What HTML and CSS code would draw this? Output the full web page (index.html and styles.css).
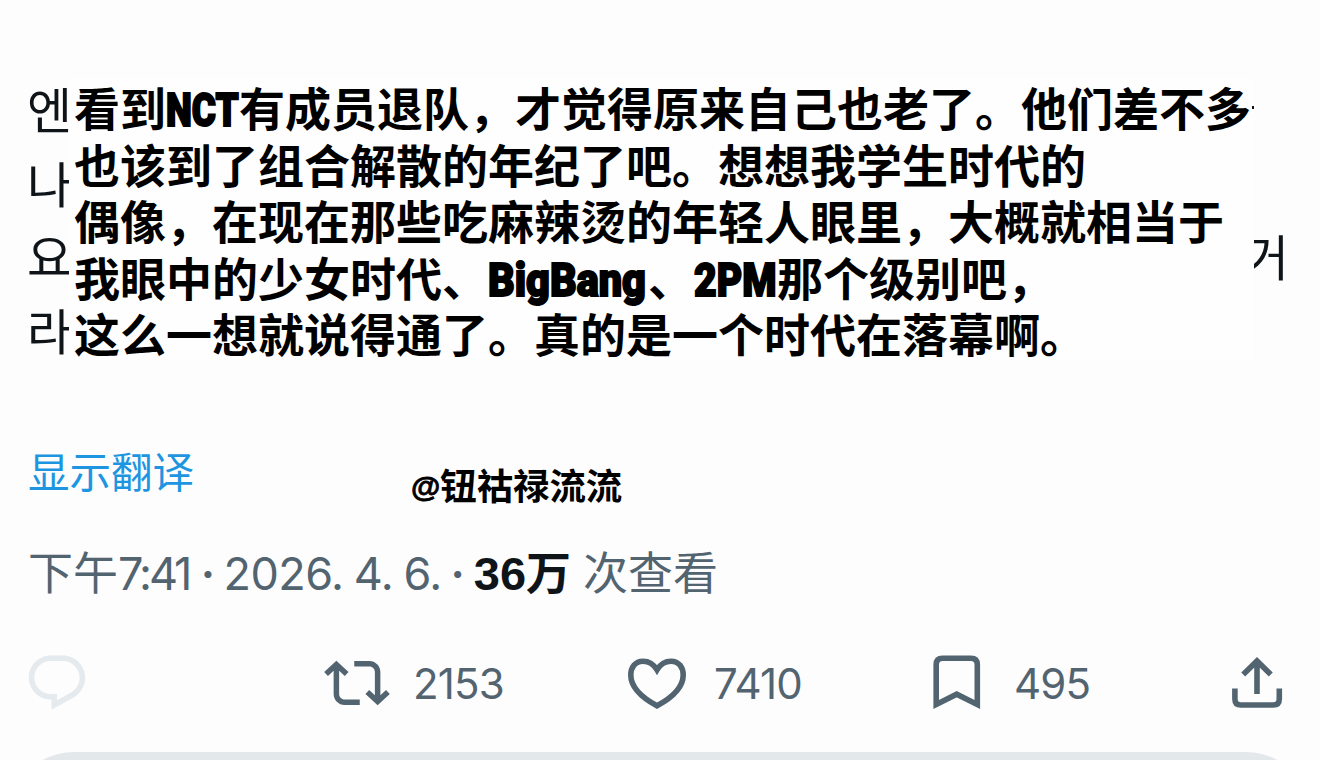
FILE: index.html
```html
<!DOCTYPE html>
<html lang="zh-CN">
<head>
    <meta charset="UTF-8">
    <meta name="viewport" content="width=device-width, initial-scale=1.0">
    <title>Post</title>
    <link rel="stylesheet" href="styles.css">
</head>
<body>
    <main class="post">
        <div class="post-body">
            <div class="original" lang="ko">
                <p>엔</p>
                <p>나</p>
                <p><span>요</span><span class="line-end">거</span></p>
                <p>라</p>
            </div>
            <div class="caption">
                <p>看到<span class="latin nct"><b>NCT</b></span>有成员退队，才觉得原来自己也老了。他们差不多</p>
                <p>也该到了组合解散的年纪了吧。想想我学生时代的</p>
                <p>偶像，在现在那些吃麻辣烫的年轻人眼里，大概就相当于</p>
                <p>我眼中的少女时代、<span class="latin bigbang"><b>BigBang</b></span>、<span class="latin twopm"><b>2PM</b></span>那个级别吧，</p>
                <p>这么一想就说得通了。真的是一个时代在落幕啊。</p>
                <i class="tick"></i>
            </div>
        </div>

        <div class="translate-row">
            <a class="translate">显示翻译</a>
            <span class="watermark"><span class="at">@</span>钮祜禄流流</span>
        </div>

        <div class="meta">
            <span class="time">下午<span class="clock">7:41</span></span>
            <span class="dot">·</span>
            <span class="date">2026. 4. 6.</span>
            <span class="dot">·</span>
            <span class="views"><span class="count">36</span>万</span>
            <span class="views-label">次查看</span>
        </div>

        <div class="actions">
            <div class="action reply">
                <svg width="66" height="66" viewBox="0 0 24 24"><path d="M1.751 10c0-4.42 3.584-8 8.005-8h4.366c4.49 0 8.129 3.64 8.129 8.13 0 2.96-1.607 5.68-4.196 7.11l-8.054 4.46v-3.69h-.067c-4.49.1-8.183-3.51-8.183-8.01zm8.005-6c-3.317 0-6.005 2.69-6.005 6 0 3.37 2.77 6.08 6.138 6.01l.351-.01h1.761v2.3l5.087-2.81c1.951-1.08 3.163-3.13 3.163-5.36 0-3.39-2.744-6.13-6.129-6.13H9.756z"/></svg>
            </div>
            <div class="action repost">
                <svg width="66" height="66" viewBox="0 0 24 24"><path d="M4.5 3.88l4.432 4.14-1.364 1.46L5.5 7.55V16c0 1.1.896 2 2 2H13v2H7.5c-2.209 0-4-1.79-4-4V7.55L1.432 9.48.068 8.02 4.5 3.88zM16.5 6H11V4h5.5c2.209 0 4 1.79 4 4v8.45l2.068-1.93 1.364 1.46-4.432 4.14-4.432-4.14 1.364-1.46 2.068 1.93V8c0-1.1-.896-2-2-2z"/></svg>
                <span>2153</span>
            </div>
            <div class="action like">
                <svg class="line" width="66" height="66" viewBox="0 0 66 66"><path d="M32 19.800C28.500 14 23 11.200 18 11.200C10 11.200 5.800 17.500 5.800 25C5.800 38.500 18.500 48.500 32 55.800C45.500 48.500 58.200 38.500 58.200 25C58.200 17.500 54 11.200 46 11.200C41 11.200 35.500 14 32 19.800Z"/></svg>
                <span>7410</span>
            </div>
            <div class="action bookmark">
                <svg class="line" width="66" height="66" viewBox="0 0 66 66"><path d="M7.200 54.500V14.500Q7.200 8.200 13.500 8.200H42Q48.300 8.200 48.300 14.500V54.500L27.700 44.200Z"/></svg>
                <span>495</span>
            </div>
            <div class="action share">
                <svg class="line" width="66" height="66" viewBox="0 0 66 66"><path d="M30 44V11M16.200 24.500L30 11L43.800 24.500M7.900 38.500V49Q7.900 55 13.900 55H46.300Q52.300 55 52.300 49V38.500"/></svg>
            </div>
        </div>

        <div class="reply-box"></div>
    </main>
</body>
</html>
```
FILE: styles.css
```css
* {
    box-sizing: border-box;
}

body {
    margin: 0;
    background-color: #fdfdfd;
    font-family: Inter, "Noto Sans CJK SC", sans-serif;
    color: #536471;
}

p {
    margin: 0;
}

.post {
    width: 1320px;
    height: 760px;
    padding: 71px 28px 0;
    overflow: hidden;
}

.post-body {
    position: relative;
    height: 363px;
}

.original {
    font-family: "Noto Sans CJK KR", sans-serif;
    font-size: 49px;
    line-height: 73.5px;
    font-weight: 400;
    color: #0f1419;
}

.original p {
    display: flex;
    justify-content: space-between;
    margin-left: -1px;
}

.line-end {
    margin-right: 3px;
}

/* Chinese caption pasted over the original text */
.caption {
    position: absolute;
    left: 41px;
    top: 7px;
    width: 1185px;
    height: 283px;
    padding-left: 5px;
    background-color: #fefefe;
    color: #000;
    font-family: "Noto Sans CJK SC", sans-serif;
    font-size: 46px;
    font-weight: 700;
    line-height: 56.5px;
    white-space: nowrap;
}

.latin {
    display: inline-block;
    font-family: Roboto, sans-serif;
    font-weight: 900;
    line-height: 1;
}

.latin b {
    display: inline-block;
    font-weight: 900;
    -webkit-text-stroke: 2px #000;
    transform: scaleX(0.8);
    transform-origin: left;
}

.nct {
    width: 73px;
}

.bigbang {
    width: 160px;
}

.bigbang b {
    transform: scaleX(0.9);
}

.twopm {
    width: 83px;
}

.twopm b {
    transform: scaleX(0.85);
}

.tick {
    position: absolute;
    right: 0;
    top: 28px;
    width: 2px;
    height: 3px;
    background-color: #0f1419;
}

.translate-row {
    display: flex;
    height: 100px;
}

.translate {
    width: 383px;
    padding-top: 6px;
    font-family: "Noto Sans CJK SC", sans-serif;
    font-size: 41.5px;
    line-height: 60px;
    color: #1d95e0;
}

.watermark {
    padding-top: 20px;
    font-family: "Noto Sans CJK SC", sans-serif;
    font-size: 36.4px;
    font-weight: 700;
    line-height: 60px;
    color: #000;
}

.at {
    position: relative;
    top: -3px;
    font-family: "Liberation Sans", sans-serif;
    font-size: 30px;
    -webkit-text-stroke: 0.8px #000;
}

.meta {
    display: flex;
    align-items: baseline;
    height: 116px;
    padding-top: 10px;
    font-size: 45px;
    line-height: 60px;
    white-space: nowrap;
}

.clock {
    letter-spacing: -3px;
}

.dot {
    width: 34px;
    padding-left: 3px;
    text-align: center;
    font-weight: 600;
}

.date {
    letter-spacing: -0.5px;
    word-spacing: -2px;
}

.date + .dot {
    width: 32px;
    padding-left: 0;
}

.views {
    margin-right: 12px;
    font-weight: 700;
    color: #0f1419;
}

.count {
    font-family: "Liberation Sans", sans-serif;
    font-size: 47px;
}

.actions {
    display: grid;
    grid-template-columns: 300px 301px 304px 298px 66px;
    height: 102px;
    margin-left: -4px;
    margin-right: -12px;
}

.action {
    display: flex;
    align-items: center;
    height: 66px;
    font-size: 42px;
    letter-spacing: -0.8px;
}

.action svg {
    flex: none;
    fill: #536471;
}

.action .line {
    fill: none;
    stroke: #536471;
    stroke-width: 5.6;
}

.action span {
    margin-left: 23px;
}

.action.bookmark span {
    margin-left: 19px;
}

.action.reply svg {
    fill: #e4eaed;
}

.reply-box {
    height: 60px;
    margin: 0 1px;
    background-color: #e3e8eb;
    border-radius: 46px / 28px;
}
```
